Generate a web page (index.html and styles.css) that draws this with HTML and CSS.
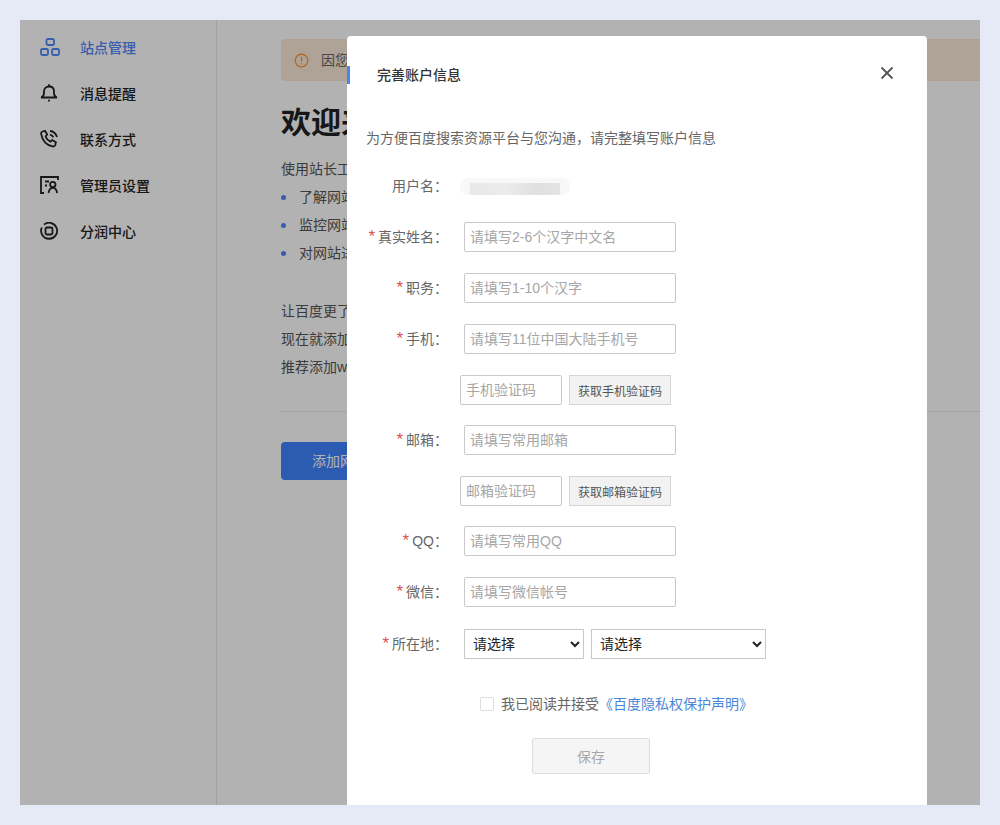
FILE: index.html
```html
<!DOCTYPE html>
<html lang="zh-CN">
	<head>
		<meta charset="UTF-8" />
		<meta name="viewport" content="width=device-width,initial-scale=1.0" />
		<title>完善账户信息</title>
		<link rel="stylesheet" href="styles.css">
	</head>
	<body>
		<div class="app">
			<aside class="sidebar">
				<a class="nav-item active">
					<svg class="nav-icon" viewBox="0 0 20 18"><rect x="6.500" y="1" width="7.500" height="6" rx="1.500"/><rect x="1" y="11" width="7" height="6" rx="1.500"/><rect x="12" y="11" width="7" height="6" rx="1.500"/></svg>
					站点管理
				</a>
				<a class="nav-item">
					<svg class="nav-icon" viewBox="0 0 20 18"><path d="M1 13.500c2-.5 3-1.800 3-4.500V7.500C4 4.500 6 2.500 9 2.500s5 2 5 5V9c0 2.700 1 4 3 4.500z"/><path d="M9 .2v2.300M9 15.800v1.800"/></svg>
					消息提醒
				</a>
				<a class="nav-item">
					<svg class="nav-icon" viewBox="0 0 20 18"><path d="M2.500 1.500 5 .8l2.200 3.700-1.600 2c.8 2.400 2.400 4 4.800 5.100l1.800-1.500 3.700 2.200-.6 2.700c-.4 1-1.500 1.700-2.800 1.400C6.500 15.200 2.300 10.500 1.200 4.200.9 3 1.400 2 2.500 1.500z"/><path d="M10 1c3.300.3 6 2.800 7 6M10 4.600c1.600.3 2.800 1.300 3.300 2.800"/></svg>
					联系方式
				</a>
				<a class="nav-item">
					<svg class="nav-icon" viewBox="0 0 20 18"><path d="M18 4V1H1v16h3"/><path d="M5 5.500h4M5 9.500h2"/><circle cx="12.800" cy="8.500" r="2.700"/><path d="M8.500 17c.5-3 2.200-5.200 4.300-5.200s3.900 2.200 4.400 5.200"/></svg>
					管理员设置
				</a>
				<a class="nav-item">
					<svg class="nav-icon" viewBox="0 0 20 18"><path d="M4 2.600A8 8 0 1 1 1.800 5.500"/><rect x="5.500" y="5.500" width="7" height="7" rx="1.500"/></svg>
					分润中心
				</a>
			</aside>

			<main class="content">
				<div class="alert">
					<svg class="alert-icon" viewBox="0 0 16 16"><circle cx="8" cy="8" r="6.700"/><path d="M8 4v5M8 10.800v1.200"/></svg>
					因您的账户信息不完整
				</div>
				<h1>欢迎来到站长工具</h1>
				<p>使用站长工具，您可以：</p>
				<ul>
					<li>了解网站数据</li>
					<li>监控网站状况</li>
					<li>对网站进行优化</li>
				</ul>
				<div class="intro">
					<p>让百度更了解您的网站</p>
					<p>现在就添加网站</p>
					<p>推荐添加www域名</p>
				</div>
				<hr>
				<button class="add-btn">添加网站</button>
			</main>

			<div class="overlay"></div>

			<section class="modal">
				<header class="modal-head">
					<h2>完善账户信息</h2>
					<svg class="close" viewBox="0 0 14 14"><path d="M1.500 1.500l11 11M12.500 1.500l-11 11"/></svg>
				</header>
				<p class="tip">为方便百度搜索资源平台与您沟通，请完整填写账户信息</p>

				<form class="account-form">
					<div class="row user-row">
						<label>用户名：</label>
						<div class="blurred"></div>
					</div>
					<div class="row">
						<label><em>*</em>真实姓名：</label>
						<input type="text" placeholder="请填写2-6个汉字中文名">
					</div>
					<div class="row">
						<label><em>*</em>职务：</label>
						<input type="text" placeholder="请填写1-10个汉字">
					</div>
					<div class="row">
						<label><em>*</em>手机：</label>
						<input type="text" placeholder="请填写11位中国大陆手机号">
					</div>
					<div class="row code-row">
						<input type="text" placeholder="手机验证码">
						<button type="button">获取手机验证码</button>
					</div>
					<div class="row">
						<label><em>*</em>邮箱：</label>
						<input type="text" placeholder="请填写常用邮箱">
					</div>
					<div class="row code-row">
						<input type="text" placeholder="邮箱验证码">
						<button type="button">获取邮箱验证码</button>
					</div>
					<div class="row">
						<label><em>*</em>QQ：</label>
						<input type="text" placeholder="请填写常用QQ">
					</div>
					<div class="row">
						<label><em>*</em>微信：</label>
						<input type="text" placeholder="请填写微信帐号">
					</div>
					<div class="row select-row">
						<label><em>*</em>所在地：</label>
						<select class="province"><option>请选择</option></select>
						<select class="city"><option>请选择</option></select>
					</div>
					<div class="agree">
						<span class="check"></span>
						我已阅读并接受<a>《百度隐私权保护声明》</a>
					</div>
					<button type="button" class="save" disabled>保存</button>
				</form>
			</section>
		</div>
	</body>
</html>
```

FILE: styles.css
```css
* {
	box-sizing: border-box;
}
html, body {
	height: 100%;
}
body {
	margin: 0;
	padding: 20px;
	background: #e6eaf6;
	overflow: hidden;
	font-family: "Liberation Sans", "Noto Sans CJK SC", sans-serif;
	font-size: 14px;
	color: #333;
}
p {
	margin: 0;
}

.app {
	position: relative;
	display: flex;
	height: 785px;
	background: #fff;
	overflow: hidden;
}
.overlay {
	position: absolute;
	inset: 0;
	background: rgba(0, 0, 0, 0.3);
}

/* side menu */
.sidebar {
	width: 197px;
	flex-shrink: 0;
	padding-top: 4px;
	border-right: 1px solid #e8e8e8;
}
.nav-item {
	display: flex;
	align-items: center;
	height: 46px;
	padding-left: 20px;
	font-weight: 500;
	color: #222;
}
.nav-item.active {
	color: #4f86f7;
}
.nav-icon {
	width: 20px;
	height: 18px;
	margin-right: 20px;
	fill: none;
	stroke: #222;
	stroke-width: 1.800;
}
.active .nav-icon {
	stroke: #4f86f7;
}

/* page behind the dialog */
.content {
	flex: 1;
	padding: 19px 0 0 64px;
	line-height: 28px;
	color: #555;
}
.alert {
	display: flex;
	align-items: center;
	height: 42px;
	padding-left: 13px;
	background: #fbe9d8;
	border-radius: 4px 0 0 4px;
	color: #666;
}
.alert-icon {
	width: 15px;
	height: 15px;
	margin-right: 12px;
	fill: none;
	stroke: #f79a3e;
	stroke-width: 1.400;
}
.content h1 {
	margin: 22px 0 12px;
	font-size: 30px;
	line-height: 40px;
	color: #222;
}
.content ul {
	margin: 0;
	padding: 0 0 0 18px;
	list-style: none;
}
.content li {
	position: relative;
}
.content li::before {
	content: "";
	position: absolute;
	left: -18px;
	top: 12px;
	width: 5px;
	height: 5px;
	border-radius: 50%;
	background: #4f86f7;
}
.intro {
	margin-top: 30px;
}
.content hr {
	margin: 30px 0 30px;
	border: 0;
	border-top: 1px solid #e8e8e8;
}
.add-btn {
	width: 140px;
	height: 38px;
	padding: 0 0 0 31px;
	border: 0;
	border-radius: 4px;
	background: #3f83ff;
	color: #fff;
	font: inherit;
	text-align: left;
}

/* dialog */
.modal {
	position: absolute;
	left: 327px;
	top: 16px;
	width: 580px;
	height: 769px;
	background: #fff;
	border-radius: 4px 4px 0 0;
	color: #666;
}
.modal-head {
	display: flex;
	align-items: center;
	justify-content: space-between;
	height: 18px;
	margin-top: 30px;
	padding: 0 33px 0 27px;
	border-left: 3px solid #4a86e8;
}
.modal-head h2 {
	margin: -2px 0 0;
	font-size: 14px;
	font-weight: 500;
	color: #333;
}
.close {
	width: 14px;
	height: 14px;
	margin-top: -4px;
	fill: none;
	stroke: #555;
	stroke-width: 1.800;
}
.tip {
	margin: 44px 0 0 19px;
	line-height: 20px;
}
.account-form {
	display: flex;
	flex-direction: column;
	margin-top: 28px;
}
.row {
	display: flex;
	align-items: center;
	gap: 7px;
	height: 30px;
	margin-bottom: 21px;
}
.row label {
	width: 101px;
	margin: -2px 9px 0 0;
	text-align: right;
	white-space: nowrap;
}
.row em {
	margin-right: 3px;
	color: #d9534f;
	font-size: 17px;
	line-height: 14px;
	font-style: normal;
}
.user-row {
	height: 20px;
	margin-bottom: 26px;
}
.blurred {
	width: 110px;
	height: 17px;
	margin-left: -4px;
	border-radius: 8px;
	background: linear-gradient(90deg, #e8e8e8, #ececec 40%, #e0e0e0 75%, #e4e4e4) no-repeat 10px 5px / 90px 12px, #f8f8f8;
	filter: blur(0.5px);
}
.row input {
	width: 212px;
	height: 30px;
	padding: 0 5px;
	border: 1px solid #c8c8c8;
	border-radius: 2px;
	outline: none;
	font: inherit;
	color: #333;
}
.row input::placeholder {
	color: #a6a6a6;
}
.code-row {
	padding-left: 113px;
	margin-bottom: 20px;
}
.code-row input {
	width: 102px;
}
.code-row button {
	width: 102px;
	height: 30px;
	padding: 0;
	border: 1px solid #d5d5d5;
	background: #f2f2f2;
	color: #555;
	font: inherit;
	font-size: 12px;
}
.select-row {
	margin-top: 1px;
}
.row select {
	height: 30px;
	padding-left: 4px;
	border: 1px solid #c8c8c8;
	border-radius: 0;
	background: #fff;
	font: inherit;
	color: #222;
}
.province {
	width: 120px;
}
.city {
	width: 175px;
}
.agree {
	display: flex;
	align-items: center;
	margin: 14px 0 0 133px;
	height: 18px;
}
.check {
	width: 14px;
	height: 14px;
	margin: 2px 7px 0 0;
	border: 1px solid #ddd;
	border-radius: 2px;
}
.agree a {
	color: #4a86d8;
}
.save {
	width: 118px;
	height: 36px;
	margin: 26px 0 0 185px;
	border: 1px solid #ddd;
	border-radius: 2px;
	background: #f5f5f5;
	color: #a8a8a8;
	font: inherit;
}
```
